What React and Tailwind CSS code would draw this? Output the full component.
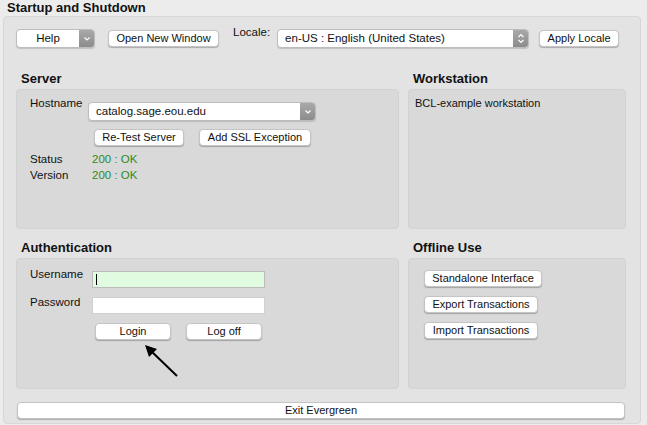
import React from "react"

const font = { fontFamily: '"Liberation Sans", Arial, sans-serif' }

function Btn({ children, className = "" }) {
  return (
    <button
      className={
        "h-[17px] rounded-[4px] bg-white border border-[#c4c4c4] shadow-[0_1px_1px_rgba(0,0,0,0.25)] text-[11px] leading-[15px] text-[#111] text-center " +
        className
      }
    >
      {children}
    </button>
  )
}

function Select({ value, className = "", updown = false, center = false }) {
  return (
    <div
      className={
        "flex h-[19px] rounded-[4px] bg-white border border-[#bdbdbd] shadow-[0_1px_1px_rgba(0,0,0,0.15)] overflow-hidden " +
        className
      }
    >
      <div
        className={
          "flex-1 text-[11.5px] leading-[17px] text-[#111] truncate " + (center ? "text-center" : "pl-[7px]")
        }
      >
        {value}
      </div>
      <div className="w-[15px] flex items-center justify-center bg-gradient-to-b from-[#a9a9a9] to-[#8c8c8c]">
        {updown ? (
          <svg width="8" height="11" viewBox="0 0 8 11">
            <path d="M1.5 4 L4 1.5 L6.5 4 M1.5 7 L4 9.5 L6.5 7" fill="none" stroke="#fff" strokeWidth="1.2" />
          </svg>
        ) : (
          <svg width="8" height="6" viewBox="0 0 8 6">
            <path d="M1.5 1.5 L4 4 L6.5 1.5" fill="none" stroke="#fff" strokeWidth="1.2" />
          </svg>
        )}
      </div>
    </div>
  )
}

function Panel({ children, className = "" }) {
  return (
    <div className={"rounded-[4px] bg-[#d9d9d9] border border-[#d2d2d2] " + className}>{children}</div>
  )
}

function Heading({ children }) {
  return <div className="pl-[5px] text-[13px] leading-[16px] font-bold text-[#111] mb-[2px]">{children}</div>
}

export default function App() {
  return (
    <div style={font} className="w-[647px] h-[425px] bg-[#ececec] text-[#111] overflow-hidden">
      <div className="pl-[7px] pt-[1px] h-[16px] text-[13px] leading-[14px] font-bold">Startup and Shutdown</div>
      <div className="ml-[3px] mr-[6px] h-[408px] rounded-[4px] bg-[#e3e3e3] border border-[#d7d7d7] pl-[12px] pr-[14px] pt-[12px]">
        <div className="flex items-start h-[19px]">
          <Select value="Help" center className="w-[79px]" />
          <Btn className="ml-[13px] mt-[1px] w-[111px]">Open New Window</Btn>
          <div className="ml-[14px] -mt-[4px] text-[11.5px] leading-[14px]">Locale:</div>
          <Select value="en-US : English (United States)" className="ml-[7px] w-[252px]" updown />
          <Btn className="ml-[10px] mt-[1px] w-[80px]">Apply Locale</Btn>
        </div>

        <div className="grid grid-cols-[383px_218px] gap-x-[9px] mt-[23px]">
          <div>
            <Heading>Server</Heading>
            <Panel className="h-[140px] pl-[13px] pt-[6px]">
              <div className="flex">
                <div className="w-[58px] text-[11.5px] leading-[14px]">Hostname</div>
                <Select value="catalog.sage.eou.edu" className="mt-[6px] w-[228px]" />
              </div>
              <div className="flex mt-[8px] ml-[64px]">
                <Btn className="w-[90px]">Re-Test Server</Btn>
                <Btn className="ml-[15px] w-[112px]">Add SSL Exception</Btn>
              </div>
              <div className="mt-[5px] text-[11.5px] leading-[16px]">
                <div className="flex">
                  <div className="w-[62px]">Status</div>
                  <div className="text-[#2d8a1d]">200 : OK</div>
                </div>
                <div className="flex">
                  <div className="w-[62px]">Version</div>
                  <div className="text-[#2d8a1d]">200 : OK</div>
                </div>
              </div>
            </Panel>
          </div>
          <div>
            <Heading>Workstation</Heading>
            <Panel className="h-[140px] pl-[6px] pt-[6px]">
              <div className="text-[11px] leading-[14px]">BCL-example workstation</div>
            </Panel>
          </div>

          <div className="mt-[11px]">
            <Heading>Authentication</Heading>
            <Panel className="relative h-[131px] pl-[13px] pt-[8px]">
              <div className="flex">
                <div className="w-[62px] text-[11.5px] leading-[14px]">Username</div>
                <div className="mt-[4px] w-[173px] h-[17px] bg-[#e0fbe0] border border-[#bcbcbc] flex items-center pl-[3px]">
                  <div className="w-[1px] h-[11px] bg-black" />
                </div>
              </div>
              <div className="flex mt-[7px]">
                <div className="w-[62px] text-[11.5px] leading-[14px]">Password</div>
                <div className="mt-[2px] w-[173px] h-[17px] bg-white border border-[#d0d0d0]" />
              </div>
              <div className="flex mt-[9px] ml-[65px]">
                <Btn className="w-[76px]">Login</Btn>
                <Btn className="ml-[15px] w-[76px]">Log off</Btn>
              </div>
              <svg className="absolute left-[126px] top-[85px]" width="36" height="34" viewBox="0 0 36 34">
                <path d="M34 32 L6 5" stroke="#000" strokeWidth="2" />
                <path d="M2 1 L14 5 L6 13 Z" fill="#000" />
              </svg>
            </Panel>
          </div>
          <div className="mt-[11px]">
            <Heading>Offline Use</Heading>
            <Panel className="h-[131px] pl-[15px] pt-[11px]">
              <div className="flex flex-col items-start gap-[9px]">
                <Btn className="w-[118px]">Standalone Interface</Btn>
                <Btn className="w-[114px]">Export Transactions</Btn>
                <Btn className="w-[114px]">Import Transactions</Btn>
              </div>
            </Panel>
          </div>
        </div>

        <div className="mt-[8px] pl-[1px]">
          <Btn className="w-[608px] h-[16px] leading-[14px]">Exit Evergreen</Btn>
        </div>
      </div>
    </div>
  )
}
